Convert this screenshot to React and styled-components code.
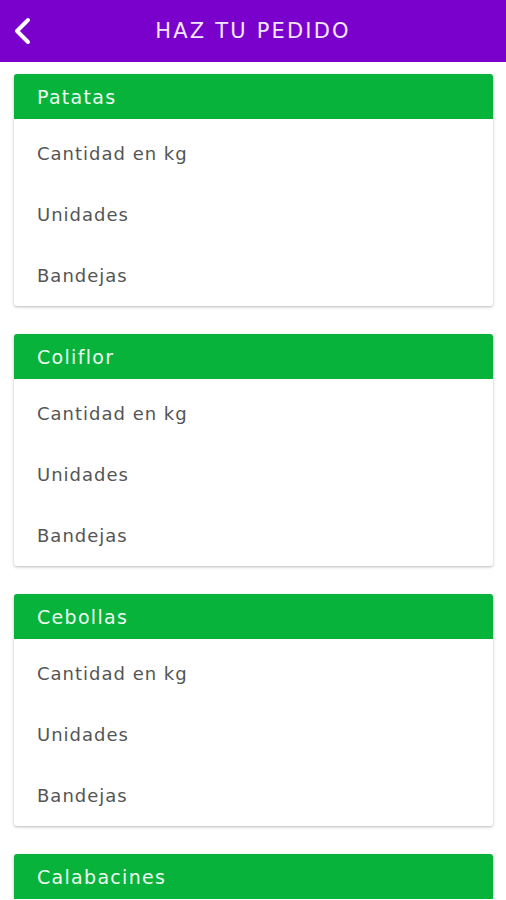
import React from "react";
import styled, { createGlobalStyle } from "styled-components";

const GlobalStyle = createGlobalStyle`
  * { box-sizing: border-box; }
  body {
    margin: 0;
    background: #ffffff;
    font-family: "DejaVu Sans", "Open Sans", sans-serif;
  }
`;

const Page = styled.div`
  width: 506px;
  height: 900px;
  overflow: hidden;
  background: #ffffff;
`;

const TopBar = styled.header`
  height: 62px;
  background: #7a00cc;
  display: flex;
  align-items: center;
`;

const BackButton = styled.button`
  width: 44px;
  height: 62px;
  border: none;
  background: transparent;
  display: flex;
  align-items: center;
  justify-content: center;
  padding: 0 0 0 2px;
  cursor: pointer;
`;

const Title = styled.h1`
  flex: 1;
  margin: 0 44px 0 0;
  text-align: center;
  color: #f3e8ff;
  font-size: 21px;
  font-weight: 400;
  letter-spacing: 2.2px;
`;

const List = styled.main`
  display: flex;
  flex-direction: column;
  gap: 28px;
  padding: 12px 13px 0 14px;
`;

const Card = styled.section`
  background: #ffffff;
  border-radius: 3px;
  box-shadow: 0 1px 3px rgba(0, 0, 0, 0.28);
  overflow: hidden;
`;

const CardHeader = styled.div`
  height: 45px;
  background: #08b33b;
  color: #eefbf0;
  display: flex;
  align-items: center;
  padding-left: 23px;
  font-size: 19px;
  letter-spacing: 1.3px;
`;

const CardBody = styled.div`
  padding-top: 4px;
`;

const Row = styled.div`
  height: 61px;
  display: flex;
  align-items: center;
  padding-left: 23px;
  color: #555555;
  font-size: 18px;
  letter-spacing: 1px;
`;

const products = ["Patatas", "Coliflor", "Cebollas", "Calabacines"];
const fields = ["Cantidad en kg", "Unidades", "Bandejas"];

const App = () => {
  return (
    <Page>
      <GlobalStyle />
      <TopBar>
        <BackButton aria-label="Volver">
          <svg width="22" height="28" viewBox="0 0 22 28">
            <path
              d="M16 3 L5 14 L16 25"
              fill="none"
              stroke="#ffffff"
              strokeWidth="4"
              strokeLinecap="round"
              strokeLinejoin="round"
            />
          </svg>
        </BackButton>
        <Title>HAZ TU PEDIDO</Title>
      </TopBar>
      <List>
        {products.map((name) => (
          <Card key={name}>
            <CardHeader>{name}</CardHeader>
            <CardBody>
              {fields.map((f) => (
                <Row key={f}>{f}</Row>
              ))}
            </CardBody>
          </Card>
        ))}
      </List>
    </Page>
  );
};

export default App;
